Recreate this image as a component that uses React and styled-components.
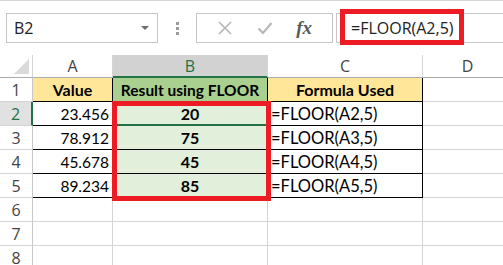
import React from "react";
import styled, { createGlobalStyle } from "styled-components";

const GlobalStyle = createGlobalStyle`
  html, body { margin: 0; padding: 0; background: #fff; }
  body { width: 503px; height: 265px; overflow: hidden; }
`;

const Page = styled.div`
  width: 503px;
  height: 265px;
  overflow: hidden;
  background: #fff;
  border-top: 1px solid #d6d6d6;
  box-sizing: border-box;
`;

const Toolbar = styled.div`
  display: flex;
  align-items: center;
  height: 54px;
  padding: 0 0 0 6px;
  box-sizing: border-box;
  font-family: "Open Sans", "Liberation Sans", sans-serif;
`;

const NameBox = styled.div`
  width: 152px;
  height: 30px;
  box-sizing: border-box;
  border: 1px solid #c6c6c6;
  display: flex;
  align-items: center;
  justify-content: space-between;
  padding: 0 8px 0 7px;
  font-size: 16px;
  color: #222;
`;

const Caret = styled.span`
  width: 0;
  height: 0;
  border-left: 4px solid transparent;
  border-right: 4px solid transparent;
  border-top: 4px solid #6d6d6d;
`;

const Grip = styled.div`
  width: 38px;
  display: flex;
  flex-direction: column;
  align-items: center;
  gap: 2px;
  span {
    width: 3px;
    height: 3px;
    background: #9b9b9b;
  }
`;

const ToolBox = styled.div`
  width: 137px;
  height: 30px;
  box-sizing: border-box;
  border: 1px solid #c6c6c6;
  display: flex;
  align-items: center;
  justify-content: space-around;
  padding: 0 8px;
`;

const Fx = styled.span`
  font-family: "Liberation Serif", serif;
  font-style: italic;
  font-weight: 700;
  font-size: 19px;
  color: #5a5a5a;
`;

const FormulaBox = styled.div`
  position: relative;
  margin-left: 3px;
  flex: 1;
  height: 30px;
  box-sizing: border-box;
  border: 1px solid #c6c6c6;
  border-right: none;
  display: flex;
  align-items: center;
  padding-left: 14px;
  font-size: 16px;
  color: #222;
`;

const Highlight = styled.div`
  position: absolute;
  left: ${(p) => p.$left}px;
  top: ${(p) => p.$top}px;
  width: ${(p) => p.$w}px;
  height: ${(p) => p.$h}px;
  box-sizing: border-box;
  border: ${(p) => p.$b}px solid #ed1c24;
  pointer-events: none;
`;

const SheetWrap = styled.div`
  position: relative;
`;

const Sheet = styled.div`
  display: grid;
  grid-template-columns: 33px 80px 155px 155px 90px;
  grid-template-rows: 23px repeat(8, 24px);
  font-family: "Lato", "Liberation Sans", sans-serif;
`;

const ColHead = styled.div`
  box-sizing: border-box;
  display: flex;
  align-items: center;
  justify-content: center;
  font-family: "Open Sans", "Liberation Sans", sans-serif;
  font-size: 16px;
  color: ${(p) => (p.$sel ? "#217346" : "#444")};
  background: ${(p) => (p.$sel ? "#d2d2d2" : "#fff")};
  border-right: 1px solid #d4d4d4;
  border-bottom: ${(p) => (p.$sel ? "2px solid #217346" : "1px solid #ababab")};
`;

const Corner = styled.div`
  position: relative;
  box-sizing: border-box;
  border-right: 1px solid #d4d4d4;
  border-bottom: 1px solid #ababab;
  &::after {
    content: "";
    position: absolute;
    right: 3px;
    bottom: 3px;
    width: 0;
    height: 0;
    border-left: 15px solid transparent;
    border-bottom: 15px solid #dadada;
  }
`;

const RowHead = styled.div`
  box-sizing: border-box;
  display: flex;
  align-items: center;
  justify-content: center;
  font-family: "Open Sans", "Liberation Sans", sans-serif;
  font-size: 16px;
  color: ${(p) => (p.$sel ? "#217346" : "#444")};
  background: ${(p) => (p.$sel ? "#e1e1e1" : "#fff")};
  border-right: ${(p) => (p.$sel ? "2px solid #217346" : "1px solid #c8c8c8")};
  border-bottom: 1px solid #d4d4d4;
`;

const Cell = styled.div`
  box-sizing: border-box;
  display: flex;
  align-items: center;
  justify-content: ${(p) => p.$align || "flex-start"};
  padding: 0 3px;
  font-size: ${(p) => p.$size || 16}px;
  font-weight: ${(p) => (p.$bold ? 700 : 400)};
  color: #000;
  background: ${(p) => p.$bg || "#fff"};
  border-right: 1px solid ${(p) => (p.$table ? "#000" : "#d4d4d4")};
  border-bottom: ${(p) =>
    p.$active ? "2px solid #217346" : `1px solid ${p.$table ? "#000" : "#d4d4d4"}`};
  white-space: nowrap;
`;

const data = [
  ["23.456", "20", "=FLOOR(A2,5)"],
  ["78.912", "75", "=FLOOR(A3,5)"],
  ["45.678", "45", "=FLOOR(A4,5)"],
  ["89.234", "85", "=FLOOR(A5,5)"],
];

const XIcon = () => (
  <svg width="16" height="16" viewBox="0 0 16 16">
    <path d="M2 2 L14 14 M14 2 L2 14" stroke="#b5b5b5" strokeWidth="1.6" fill="none" />
  </svg>
);

const CheckIcon = () => (
  <svg width="16" height="16" viewBox="0 0 16 16">
    <path d="M1.5 8.5 L6 13 L14.5 3" stroke="#b5b5b5" strokeWidth="2" fill="none" />
  </svg>
);

export default function App() {
  return (
    <Page>
      <GlobalStyle />
      <Toolbar>
        <NameBox>
          B2
          <Caret />
        </NameBox>
        <Grip>
          <span />
          <span />
          <span />
        </Grip>
        <ToolBox>
          <XIcon />
          <CheckIcon />
          <Fx>fx</Fx>
        </ToolBox>
        <FormulaBox>
          =FLOOR(A2,5)
          <Highlight $left={3} $top={-5} $w={124} $h={36} $b={5} />
        </FormulaBox>
      </Toolbar>
      <SheetWrap>
        <Sheet>
          <Corner />
          <ColHead>A</ColHead>
          <ColHead $sel>B</ColHead>
          <ColHead>C</ColHead>
          <ColHead>D</ColHead>

          <RowHead>1</RowHead>
          <Cell $table $bold $align="center" $bg="#ffe699">Value</Cell>
          <Cell $table $bold $align="center" $bg="#a9d08e" $size={15.5}>Result using FLOOR</Cell>
          <Cell $table $bold $align="center" $bg="#ffe699">Formula Used</Cell>
          <Cell />

          {data.map((r, i) => (
            <React.Fragment key={i}>
              <RowHead $sel={i === 0}>{i + 2}</RowHead>
              <Cell $table $align="flex-end" $size={15.5}>{r[0]}</Cell>
              <Cell $table $bold $align="center" $bg="#e2efda" $active={i === 0}>
                {r[1]}
              </Cell>
              <Cell $table $size={16.5}>{r[2]}</Cell>
              <Cell />
            </React.Fragment>
          ))}

          {[6, 7, 8].map((n) => (
            <React.Fragment key={n}>
              <RowHead>{n}</RowHead>
              <Cell />
              <Cell />
              <Cell />
              <Cell />
            </React.Fragment>
          ))}
        </Sheet>
        <Highlight $left={112} $top={46} $w={159} $h={100} $b={5} />
      </SheetWrap>
    </Page>
  );
}
